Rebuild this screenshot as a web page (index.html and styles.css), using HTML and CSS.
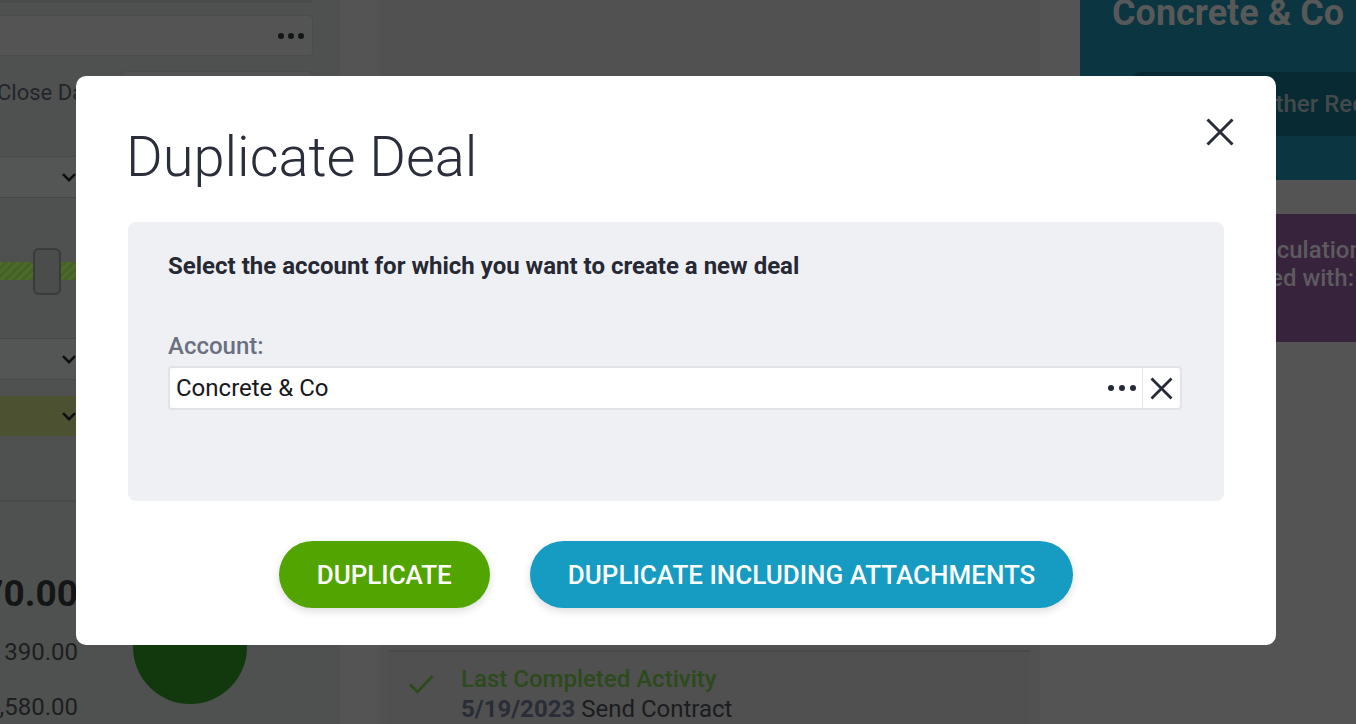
FILE: index.html
```html
<!DOCTYPE html>
<html lang="en">
<head>
<meta charset="utf-8">
<title>Duplicate Deal</title>
<link rel="stylesheet" href="styles.css">
</head>
<body>
<div class="page">
  <aside class="left">
    <div class="left-top-edge"></div>
    <div class="lookup">
      <span class="lookup-text"></span>
      <span class="dots dots-dark"><i></i><i></i><i></i></span>
    </div>
    <div class="form-row">
      <div class="form-label-cell"><span class="form-label">Expected Close Date</span></div>
      <div class="date-input"></div>
    </div>
    <div class="select-row">
      <div class="select-cell">
        <svg class="chev" width="14" height="9" viewBox="0 0 14 9"><path d="M1 1.2l6 6 6-6" fill="none" stroke="#0d0e0f" stroke-width="2.4"/></svg>
      </div>
    </div>
    <div class="slider-area">
      <div class="slider-track"></div>
      <div class="slider-thumb"></div>
    </div>
    <div class="select-row">
      <div class="select-cell">
        <svg class="chev" width="14" height="9" viewBox="0 0 14 9"><path d="M1 1.2l6 6 6-6" fill="none" stroke="#0d0e0f" stroke-width="2.4"/></svg>
      </div>
    </div>
    <div class="spacer-16"></div>
    <div class="select-row select-row-green">
      <div class="select-cell">
        <svg class="chev" width="14" height="9" viewBox="0 0 14 9"><path d="M1 1.2l6 6 6-6" fill="none" stroke="#0d0e0f" stroke-width="2.4"/></svg>
      </div>
    </div>
    <div class="left-blank"></div>
    <div class="stats">
      <div class="amounts">
        <div class="amount amount-big">1,770.00</div>
        <div class="amount">390.00</div>
        <div class="amount">1,580.00</div>
      </div>
      <div class="pie"></div>
    </div>
  </aside>

  <main class="middle">
    <div class="activity">
      <svg class="check" width="26" height="20" viewBox="0 0 26 20"><path d="M2 10.5l7.5 7.5L24.5 2" fill="none" stroke="#2c4a1b" stroke-width="2.6"/></svg>
      <div class="activity-text">
        <div class="activity-title">Last Completed Activity</div>
        <div class="activity-line"><span class="activity-date">5/19/2023</span> Send Contract</div>
      </div>
    </div>
  </main>

  <aside class="right">
    <div class="account-card">
      <h2 class="account-name">Concrete &amp; Co</h2>
      <div class="other-records">Other Records</div>
    </div>
    <div class="calc-card">
      <div class="calc-line">Calculation</div>
      <div class="calc-line">Used with:</div>
    </div>
  </aside>
</div>

<div class="overlay">
  <div class="modal" role="dialog" aria-labelledby="dlg-title">
    <button class="modal-close" aria-label="Close">
      <svg width="28" height="28" viewBox="0 0 28 28"><path d="M1.5 1.5l25 25M26.5 1.5l-25 25" fill="none" stroke="#2a2d3a" stroke-width="3"/></svg>
    </button>
    <h1 class="modal-title" id="dlg-title">Duplicate Deal</h1>
    <div class="panel">
      <p class="panel-heading">Select the account for which you want to create a new deal</p>
      <label class="field-label">Account:</label>
      <div class="field">
        <span class="field-value">Concrete &amp; Co</span>
        <span class="dots"><i></i><i></i><i></i></span>
        <span class="field-clear">
          <svg width="23" height="23" viewBox="0 0 23 23"><path d="M1.5 1.5l20 20M21.5 1.5l-20 20" fill="none" stroke="#262a35" stroke-width="2.8"/></svg>
        </span>
      </div>
    </div>
    <div class="actions">
      <button class="btn btn-green">Duplicate</button>
      <button class="btn btn-blue">Duplicate including attachments</button>
    </div>
  </div>
</div>
</body>
</html>
```

FILE: styles.css
```css
* { box-sizing: border-box; margin: 0; padding: 0; }
html, body { width: 100%; height: 100%; }
body {
  font-family: Roboto, "Noto Sans", "Liberation Sans", sans-serif;
  background: #545454;
  overflow: hidden;
}

.page {
  display: flex;
  gap: 40px;
  height: 724px;
  background: #545454;
}

/* ---------- left panel (dimmed) ---------- */
.left {
  width: 340px;
  flex: none;
  background: #4f5150;
  overflow: hidden;
  padding-right: 27px;
  display: flex;
  flex-direction: column;
}
.left > * { flex: none; }
.left-top-edge {
  height: 3px;
  background: #4a4b4b;
  border-bottom-right-radius: 4px;
  margin-bottom: 12px;
}
.lookup {
  height: 41px;
  background: #545454;
  border: 1px solid #4b4c4c;
  border-left: none;
  border-radius: 0 4px 4px 0;
  display: flex;
  align-items: center;
  justify-content: flex-end;
  padding-right: 8px;
}
.dots { display: flex; gap: 4px; align-items: center; }
.dots i { width: 6px; height: 6px; border-radius: 50%; background: #262a35; display: block; }
.dots-dark i { background: #141516; width: 6px; height: 6px; }
.form-row {
  display: flex;
  gap: 18px;
  margin-top: 15px;
  height: 42px;
  align-items: center;
}
.form-label-cell {
  width: 103px;
  flex: none;
  display: flex;
  justify-content: flex-end;
  white-space: nowrap;
  padding-top: 2px;
}
.form-label { font-size: 22px; line-height: 28px; color: #23252b; }
.date-input {
  flex: 1;
  align-self: stretch;
  background: #545454;
  border: 1px solid #4b4c4c;
  border-radius: 4px;
}
.select-row {
  height: 42px;
  background: #545555;
  border-top: 1px solid #474848;
  border-bottom: 1px solid #474848;
  margin-right: -27px;
  display: flex;
  align-items: center;
}
.form-row + .select-row { margin-top: 43px; }
.select-cell {
  width: 86px;
  display: flex;
  justify-content: flex-end;
  padding-right: 10px;
}
.chev { display: block; }
.select-row-green { background: #4b5131; border-color: #4b5131; height: 40px; }
.spacer-16 { height: 16px; }
.slider-area {
  position: relative;
  height: 140px;
  margin-right: -27px;
  padding-top: 64px;
}
.slider-track {
  height: 18px;
  background: repeating-linear-gradient(135deg, #4c6a29 0 3px, #456126 3px 6px);
}
.slider-thumb {
  position: absolute;
  left: 33px;
  top: 50px;
  width: 28px;
  height: 47px;
  border-radius: 6px;
  background: #4b4c4c;
  border: 2px solid #3a3b3b;
}
.left-blank {
  height: 66px;
  border-bottom: 2px solid #474848;
  margin-right: -27px;
}
.stats { display: flex; padding-top: 70px; }
.amounts {
  width: 78px;
  flex: none;
  display: flex;
  flex-direction: column;
  align-items: flex-end;
}
.amount {
  font-size: 24px;
  line-height: 55px;
  color: #1d1e21;
  white-space: nowrap;
}
.amount-big {
  font-size: 37px;
  line-height: 44px;
  font-weight: 700;
  color: #141516;
  margin-bottom: 9px;
}
.pie {
  width: 114px;
  height: 114px;
  flex: none;
  border-radius: 50%;
  background: #12390e;
  margin-left: 55px;
  margin-top: 18px;
}

/* ---------- middle panel ---------- */
.middle {
  width: 660px;
  flex: none;
  background: #505150;
  display: flex;
  flex-direction: column;
  padding: 0 10px 0 8px;
}
.activity {
  margin-top: auto;
  height: 74px;
  flex: none;
  border-top: 2px solid #484949;
  background: #4f504f;
  display: flex;
  gap: 27px;
  padding: 12px 0 0 20px;
}
.check { margin-top: 10px; flex: none; }
.activity-title { font-size: 24px; line-height: 30px; font-weight: 500; color: #2c4a1b; }
.activity-line { font-size: 24px; line-height: 30px; color: #1b1c1f; white-space: nowrap; }
.activity-date { font-weight: 700; color: #2a2c37; }

/* ---------- right column ---------- */
.right {
  flex: 1;
  min-width: 0;
  overflow: hidden;
  display: flex;
  flex-direction: column;
  gap: 34px;
}
.right > * { flex: none; }
.account-card {
  height: 180px;
  background: #0b3541;
  padding-left: 32px;
}
.account-name {
  font-size: 36px;
  line-height: 40px;
  font-weight: 700;
  color: #575858;
  margin-top: -7px;
  white-space: nowrap;
}
.other-records {
  margin: 39px 0 0 18px;
  height: 64px;
  background: #082a33;
  border-radius: 12px 0 0 12px;
  font-size: 24px;
  line-height: 64px;
  font-weight: 500;
  color: #434a4c;
  padding-left: 129px;
  white-space: nowrap;
}
.calc-card {
  height: 128px;
  background: #38233c;
  padding: 22px 0 0 162px;
}
.calc-line {
  font-size: 24px;
  line-height: 28px;
  font-weight: 500;
  color: #5d5a60;
  white-space: nowrap;
}

/* ---------- modal ---------- */
.overlay {
  position: fixed;
  inset: 0;
  padding: 76px 0 0 76px;
}
.modal {
  position: relative;
  width: 1200px;
  background: #ffffff;
  border-radius: 10px;
  padding: 53px 52px 37px;
}
.modal-close {
  position: absolute;
  top: 42px;
  right: 42px;
  width: 28px;
  height: 28px;
  border: none;
  background: none;
  display: block;
}
.modal-close svg { display: block; }
.modal-title {
  font-size: 56px;
  line-height: 56px;
  font-weight: 300;
  color: #2a2d3a;
  margin-left: -2px;
}
.panel {
  margin-top: 37px;
  background: #eff0f4;
  border-radius: 8px;
  padding: 30px 42px 91px 40px;
}
.panel-heading {
  font-size: 24px;
  line-height: 28px;
  font-weight: 700;
  color: #262933;
}
.field-label {
  display: block;
  margin-top: 52px;
  font-size: 24px;
  line-height: 28px;
  font-weight: 500;
  color: #6b7080;
}
.field {
  margin-top: 6px;
  height: 44px;
  background: #ffffff;
  border: 2px solid #e2e3e6;
  border-radius: 4px;
  display: flex;
  align-items: center;
}
.field-value {
  flex: 1;
  padding-left: 6px;
  font-size: 24px;
  color: #16181d;
}
.field .dots { margin-right: 6px; gap: 5px; }
.field-clear {
  align-self: stretch;
  width: 38px;
  border-left: 1px solid #e6e7ea;
  display: flex;
  align-items: center;
  justify-content: center;
}
.field-clear svg { display: block; }
.actions {
  margin-top: 40px;
  display: flex;
  justify-content: center;
  gap: 40px;
}
.btn {
  height: 67px;
  border: none;
  border-radius: 34px;
  padding: 0 38px;
  font-family: Roboto, "Noto Sans", sans-serif;
  font-size: 26px;
  font-weight: 500;
  text-transform: uppercase;
  color: #ffffff;
  box-shadow: 0 3px 9px rgba(0, 0, 0, 0.14);
}
.btn-green { background: #52a500; }
.btn-blue { background: #169cc2; }
```
